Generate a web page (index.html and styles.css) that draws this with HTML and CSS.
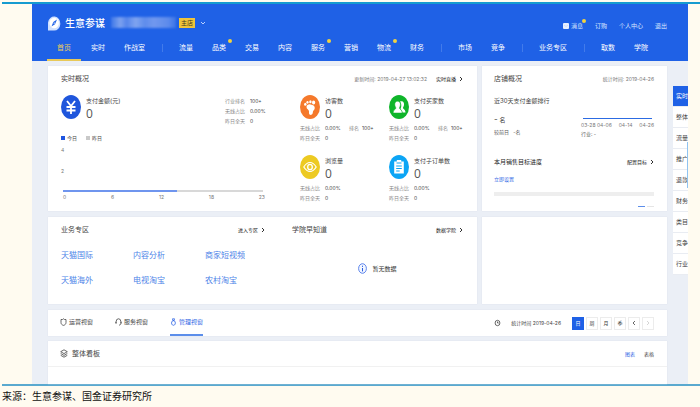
FILE: index.html
```html
<!DOCTYPE html>
<html lang="zh-CN">
<head>
<meta charset="utf-8">
<meta name="viewport" content="width=device-width, initial-scale=1">
<title>生意参谋</title>
<link rel="stylesheet" href="styles.css">
</head>
<body>
<figure class="figure">
<div class="frame">
<div class="app">
  <header class="top">
    <div class="brand-row">
      <svg class="logo" viewBox="0 0 14 16" aria-hidden="true"><path d="M1 15.500V7.500a6.200 7 0 1 1 6 8z" fill="#cfe0ff"/><ellipse cx="7.200" cy="8" rx="4.700" ry="5.300" fill="#fff"/><path d="M10 4.500 8 9.200 4.500 11.500 6.300 7z" fill="#1f61e6"/><circle cx="7.200" cy="8.100" r=".7" fill="#fff"/></svg>
      <h1 class="brand">生意参谋</h1>
      <span class="mask" aria-hidden="true"></span>
      <span class="badge">主店</span>
      <svg class="caret" viewBox="0 0 6 4" aria-hidden="true"><path d="M1 1l2 2 2-2" fill="none" stroke="#b9d0ff"/></svg>
      <nav class="user">
        <a class="dotted" href="#"><svg class="mail" viewBox="0 0 6 6" aria-hidden="true"><rect width="6" height="6" rx="1" fill="#e8f0ff"/><path d="M1 2l2 1.500L5 2" fill="none" stroke="#b5cbf7" stroke-width=".5"/></svg>消息</a>
        <a href="#">订购</a><a href="#">个人中心</a><a href="#">退出</a>
      </nav>
    </div>
    <nav class="nav">
      <a class="on" href="#">首页</a><a href="#">实时</a><a href="#">作战室</a><i></i>
      <a href="#">流量</a><a class="dotted" href="#">品类</a><a href="#">交易</a><a href="#">内容</a><a class="dotted" href="#">服务</a><a href="#">营销</a><a class="dotted" href="#">物流</a><a href="#">财务</a><i></i>
      <a href="#">市场</a><a href="#">竞争</a><i></i><a href="#">业务专区</a><i></i><a href="#">取数</a><a href="#">学院</a>
    </nav>
  </header>

  <main class="content">
    <div class="cards">
      <section class="card live">
        <div class="head">
          <h2>实时概况</h2>
          <span class="time">更新时间: 2019-04-27 13:02:32</span>
          <a class="more" href="#">实时直播<svg viewBox="0 0 4 6" aria-hidden="true"><path d="M1 1l2 2-2 2"/></svg></a>
        </div>
        <div class="live-body">
          <div class="pay">
            <div class="pay-top">
              <svg class="icon" viewBox="0 0 20 24" aria-hidden="true"><ellipse cx="10" cy="12" rx="10" ry="12" fill="#1f56dc"/><path d="M6 6l4 5 4-5M10 11v8M5.500 12h9M5.500 15.500h9" fill="none" stroke="#fff" stroke-width="1.800"/></svg>
              <div class="fig"><h3>支付金额(元)</h3><strong>0</strong></div>
              <dl class="stats"><dt>行业排名</dt><dd>100+</dd><dt>无线占比</dt><dd>0.00%</dd><dt>昨日全天</dt><dd>0</dd></dl>
            </div>
            <div class="legend"><span class="today">今日</span><span class="yesterday">昨日</span></div>
            <div class="chart">
              <div class="ylab"><span>4</span><span>2</span></div>
              <div class="line"></div>
              <div class="xlab"><span>0</span><span>6</span><span>12</span><span>18</span><span>23</span></div>
            </div>
          </div>
          <div class="metrics">
            <article>
              <div class="metric-top"><svg class="icon" viewBox="0 0 20 24" aria-hidden="true"><ellipse cx="10" cy="12" rx="10" ry="12" fill="#f5792b"/><g fill="#fff"><path d="M6.500 12c0-2 2-3 4-2.600 3 .4 4.700 1.600 4.200 4-.3 1.500-1.500 1.800-1.700 3.200-.2 1.800-.6 3.400-2.200 3.400-2 0-1.800-2.200-1.800-3.700 0-1.800-2.500-2-2.500-4.300z"/><ellipse cx="5.300" cy="9.300" rx="1.200" ry="1.500"/><ellipse cx="7.500" cy="7.300" rx="1.100" ry="1.400"/><ellipse cx="10.400" cy="6.700" rx="1.200" ry="1.500"/><ellipse cx="13.600" cy="7.500" rx="1.600" ry="1.900"/></g></svg><div class="fig"><h3>访客数</h3><strong>0</strong></div></div>
              <dl class="stats"><dt>无线占比</dt><dd>0.00%</dd><dt>排名</dt><dd>100+</dd><dt>昨日全天</dt><dd>0</dd></dl>
            </article>
            <article>
              <div class="metric-top"><svg class="icon" viewBox="0 0 20 24" aria-hidden="true"><ellipse cx="10" cy="12" rx="10" ry="12" fill="#0fb52a"/><g fill="#fff"><path d="M11 6.500c3-1.200 4.500 1 4 3.500-.2 1.500-1 2-1 3s2.500 1.500 2.500 4.500h-3c-.2-2-1.500-2.800-2-3.500.8-1.500 1.500-5-.5-7.500z"/><path d="M8.500 6.200c2 0 3 1.500 2.900 3.500-.1 1.700-1 2.600-1 3.400 0 1.300 2.800 1.400 2.800 4.900H4.200c0-3.500 2.700-3.600 2.700-4.900 0-.8-1-1.700-1.100-3.400-.1-2 .9-3.500 2.700-3.500z" stroke="#0fb52a" stroke-width=".5"/></g></svg><div class="fig"><h3>支付买家数</h3><strong>0</strong></div></div>
              <dl class="stats"><dt>无线占比</dt><dd>0.00%</dd><dt>排名</dt><dd>100+</dd><dt>昨日全天</dt><dd>0</dd></dl>
            </article>
            <article>
              <div class="metric-top"><svg class="icon" viewBox="0 0 20 24" aria-hidden="true"><ellipse cx="10" cy="12" rx="10" ry="12" fill="#edca22"/><path d="M3.800 12C7.500 6 12.500 6 16.200 12 12.500 18 7.500 18 3.800 12z" fill="none" stroke="#fff" stroke-width="1.200"/><ellipse cx="10" cy="12" rx="2.300" ry="2.700" fill="none" stroke="#fff" stroke-width="1.300"/></svg><div class="fig"><h3>浏览量</h3><strong>0</strong></div></div>
              <dl class="stats"><dt>无线占比</dt><dd>0.00%</dd><dt></dt><dd></dd><dt>昨日全天</dt><dd>0</dd></dl>
            </article>
            <article>
              <div class="metric-top"><svg class="icon" viewBox="0 0 20 24" aria-hidden="true"><ellipse cx="10" cy="12" rx="10" ry="12" fill="#0ca5f5"/><path d="M5.200 6.500h2.600V5h4.400v1.500h2.600v12H5.200z" fill="#fff"/><path d="M7.500 8h5M7.200 11h5.600M7.200 13.500h5.600M7.200 16h3.500" stroke="#0ca5f5" fill="none"/></svg><div class="fig"><h3>支付子订单数</h3><strong>0</strong></div></div>
              <dl class="stats"><dt>无线占比</dt><dd>0.00%</dd><dt></dt><dd></dd><dt>昨日全天</dt><dd>0</dd></dl>
            </article>
          </div>
        </div>
      </section>

      <section class="card shop">
        <div class="head"><h2>店铺概况</h2><span class="time">统计时间: 2019-04-26</span></div>
        <h3 class="rank-title">近30天支付金额排行</h3>
        <div class="rank">
          <div><p class="place"><b>-</b> 名</p><p class="minor">较前日 &nbsp; -名</p></div>
          <div class="trend"><div class="trend-line"></div><div class="dates"><span>03-28 04-06</span><span>04-14</span><span>04-26</span></div><p class="minor">行业: -</p></div>
        </div>
        <div class="goal"><h3>本月销售目标进度</h3><a class="more" href="#">配置目标<svg viewBox="0 0 4 6" aria-hidden="true"><path d="M1 1l2 2-2 2"/></svg></a></div>
        <a class="set" href="#">立即设置</a>
        <div class="bar"></div>
        <div class="pager"><i class="cur"></i><i></i></div>
      </section>

      <section class="card zone">
        <div>
          <div class="head"><h2>业务专区</h2><a class="more" href="#">进入专区<svg viewBox="0 0 4 6" aria-hidden="true"><path d="M1 1l2 2-2 2"/></svg></a></div>
          <div class="links"><a href="#">天猫国际</a><a href="#">内容分析</a><a href="#">商家短视频</a><a href="#">天猫海外</a><a href="#">电视淘宝</a><a href="#">农村淘宝</a></div>
        </div>
        <div>
          <div class="head"><h2>学院早知道</h2><a class="more" href="#">数据学院<svg viewBox="0 0 4 6" aria-hidden="true"><path d="M1 1l2 2-2 2"/></svg></a></div>
          <p class="empty"><svg viewBox="0 0 9 11" aria-hidden="true"><ellipse cx="4.500" cy="5.500" rx="3.900" ry="4.800" fill="#f2f6ff" stroke="#4f7bea" stroke-width=".9"/><path d="M4.500 2.700v1.200M4.500 5v3.400" stroke="#2a5fe4"/></svg>暂无数据</p>
        </div>
      </section>
      <section class="card"></section>
    </div>

    <section class="card views">
      <a href="#"><svg viewBox="0 0 7 8" aria-hidden="true"><path d="M1 1.500h1.500l1-.7 1 .7H6v3C6 6 5 7 3.500 7.400 2 7 1 6 1 4.500z"/></svg>运营视窗</a>
      <a href="#"><svg viewBox="0 0 7 8" aria-hidden="true"><path d="M1.200 5.500V3.500a2.300 2.700 0 0 1 4.600 0v2c0 1-.8 1.600-1.800 1.600M.8 3.800v1.600M6.200 3.800v1.600"/></svg>服务视窗</a>
      <a class="on" href="#"><svg viewBox="0 0 7 8" aria-hidden="true"><path d="M2.500.8h2L4.200 2.500h-1.400zM3.500 2.700a1.900 2.300 0 1 1-.1 0z"/></svg>管理视窗</a>
      <div class="period">
        <svg viewBox="0 0 7 8" aria-hidden="true"><ellipse cx="3.500" cy="4" rx="2.400" ry="2.700"/><path d="M3.500 2.500V4h1.200"/></svg>
        <span>统计时间 2019-04-26</span>
        <div class="buttons"><button class="sel">日</button><button>周</button><button>月</button><button>季</button><button aria-label="上一个"><svg viewBox="0 0 4 6"><path d="M3 1L1 3l2 2"/></svg></button><button class="off" aria-label="下一个"><svg viewBox="0 0 4 6"><path d="M1 1l2 2-2 2"/></svg></button></div>
      </div>
    </section>

    <section class="card board">
      <div class="board-head">
        <svg viewBox="0 0 8 9" aria-hidden="true"><path d="M4 .8l3.300 1.900L4 4.600.7 2.700zM.7 4.500L4 6.400l3.300-1.900M.7 6.300L4 8.200l3.300-1.900"/></svg>
        <h2>整体看板</h2>
        <a class="chosen" href="#">图表</a><a href="#">表格</a>
      </div>
    </section>
  </main>

  <nav class="rail"><a class="on" href="#">实时</a><a href="#">整体</a><a href="#">流量</a><a href="#">推广</a><a href="#">退款</a><a href="#">财务</a><a href="#">类目</a><a href="#">竞争</a><a href="#">行业</a></nav>
</div>
</div>
<figcaption>来源：生意参谋、国金证券研究所</figcaption>
</figure>
</body>
</html>
```
FILE: styles.css
```css
* { box-sizing: border-box; }
body, h1, h2, h3, p, dl, dd, figure { margin: 0; }
body {
  background: #fffbf0;
  color: #444;
  font: 6px/10px Inter, "Noto Sans CJK SC", sans-serif;
}
a { color: inherit; text-decoration: none; }
h1, h2, h3 { font-weight: 400; }
span, a, h2, h3, dt, dd, button { white-space: nowrap; }
svg { display: block; flex: none; }

.figure { padding: 2px 0 0 2px; }
.frame {
  border-top: 2px solid #169bd0;
  border-bottom: 2px solid #5aa9cf;
  padding: 0 12px 0 30px;
}
.app { position: relative; background: #ebeff6; }
figcaption {
  color: #111;
  font: 10px/20px "KaiTi", "STKaiti", "Noto Sans CJK SC", serif;
}

/* Header */
.top { padding: 0 21px 0 15px; background: #1f61e6; color: #fff; }
.brand-row { display: flex; align-items: center; height: 37px; }
.logo { width: 14px; height: 16px; }
.brand { margin-left: 4px; font-size: 10px; line-height: 16px; font-weight: 500; }
.mask {
  width: 65px;
  height: 11px;
  margin: 0 3px 0 6px;
  background: linear-gradient(90deg, #3d76e8, #7da2ef 14%, #5585eb 24%, #7fa4f0 38%, #5e8cec 52%, #7198ee 66%, #5d8bec 88%, #3b74e8);
  filter: blur(1px);
}
.badge { padding: 0 2px; background: #f0c43a; color: #3d3a25; }
.caret { width: 6px; height: 4px; margin-left: 5px; }
.user { display: flex; gap: 12px; margin-left: auto; padding-top: 6px; color: #dbe6ff; }
.user a { display: flex; align-items: center; gap: 2px; }
.mail { width: 6px; height: 6px; }
.nav { display: flex; gap: 1px; height: 20px; font-size: 7px; line-height: 14px; }
.nav a { padding: 0 9px; }
.nav .on { padding: 0 10px; color: #f0cf58; border-bottom: 2px solid #e8c95a; }
.nav i { width: 1px; height: 8px; margin: 3px 6px 0 7px; background: #427bea; }
.dotted { position: relative; }
.dotted::after {
  content: "";
  position: absolute;
  top: -2px;
  right: 3px;
  width: 4px;
  height: 4px;
  border-radius: 50%;
  background: #f3d33f;
}
.user .dotted::after { right: -3px; }

/* Cards */
.content { padding: 5px 21px 0 16px; }
.cards { display: grid; grid-template-columns: 429fr 185fr; gap: 6px 5px; }
.card { min-width: 0; background: #fff; box-shadow: 0 0 1px #d5dbe6; }
.head { display: flex; align-items: center; height: 10px; }
h2 { font-size: 7px; color: #444; }
h3 { font-size: 6px; }
.time { margin-left: auto; font-size: 5px; color: #777; }
.more { display: flex; align-items: center; gap: 3px; font-size: 5px; color: #222; }
.more svg { width: 4px; height: 6px; fill: none; stroke: #333; }
.time + .more { margin-left: 9px; }
h2 + .more, h3 + .more { margin-left: auto; }

.live { padding: 8px 14px 8px 13px; }
.live-body { display: grid; grid-template-columns: 204fr 163fr; gap: 35px; margin-top: 11px; }
.pay-top, .metric-top { display: flex; gap: 5px; }
.icon { width: 20px; height: 24px; }
.fig h3 { line-height: 12px; }
.fig strong { display: block; font: 12px/14px "Open Sans", sans-serif; color: #555; }
.stats { display: grid; grid-template-columns: 25px 20px; font-size: 5px; line-height: 10px; color: #888; }
.stats dd { color: #444; }
.pay-top .stats { margin-left: auto; padding-top: 1px; grid-template-columns: 25px 15px; }
.metrics { display: grid; grid-template-columns: 89fr 74fr; grid-template-rows: 60px auto; }
.metrics .stats { grid-template-columns: 25px 24px 13px 12px; padding-top: 2px; }
.legend { display: flex; gap: 9px; margin-top: 7px; font-size: 5px; }
.legend span { display: flex; align-items: center; gap: 2px; }
.legend span::before { content: ""; width: 4px; height: 4px; background: #1f55e0; }
.legend .yesterday::before { background: #c9c9c9; }
.chart { margin-top: 2px; font-size: 5px; color: #777; }
.ylab { display: grid; grid-auto-rows: 21px; height: 45px; }
.line { height: 2px; margin: 0 2px; background: linear-gradient(90deg, #6f95ee 57%, #d8d8d8 57%); }
.xlab { display: flex; justify-content: space-between; height: 9px; margin-left: 2px; }

.shop { padding: 8px 13px 3px 12px; }
.rank-title { margin-top: 12px; }
.rank { display: grid; grid-template-columns: 87fr 73fr; margin-top: 7px; }
.place { line-height: 12px; }
.place b { font-size: 8px; font-weight: 400; }
.minor { font-size: 5px; color: #555; }
.rank div:first-child > .minor { margin-top: 1px; }
.trend-line { height: 1px; margin: 5px 2px 1px; background: #2c6be2; }
.dates { display: flex; justify-content: space-between; font-size: 5px; color: #777; }
.trend .minor { margin-top: -1px; }
.goal { display: flex; align-items: center; margin-top: 18px; }
.goal h3 { color: #222; }
.set { display: block; margin-top: 7px; font-size: 5px; color: #2f65e5; }
.bar { height: 4px; margin-top: 8px; background: #eee; }
.pager { display: flex; justify-content: flex-end; gap: 2px; margin-top: 10px; }
.pager i { width: 7px; height: 1px; background: #e5e5e5; }
.pager .cur { background: #5c8eea; }

.zone { display: grid; grid-template-columns: 204fr 171fr; gap: 27px; min-height: 87px; padding: 8px 14px 12px 13px; }
.links { display: grid; grid-template-columns: repeat(3, 1fr); gap: 13px 12px; margin-top: 14px; font-size: 8px; line-height: 12px; color: #4d83e8; }
.empty { display: flex; justify-content: center; align-items: center; gap: 5px; margin-top: 28px; color: #333; }
.empty svg { width: 9px; height: 11px; }

.views { display: flex; gap: 22px; height: 26px; margin-top: 6px; padding: 0 13px 0 12px; }
.views > a { display: flex; align-items: center; gap: 2px; border-bottom: 2px solid transparent; }
.views svg, .board-head svg { fill: none; stroke: #444; stroke-width: .8; }
.views > a svg, .period > svg { width: 7px; height: 8px; }
.views .on { color: #2f65e5; border-color: #5c8eea; }
.views .on svg { stroke: #2f65e5; }
.period { display: flex; align-items: center; margin-left: auto; font-size: 5px; }
.period > span { margin: 0 11px 0 10px; }
.buttons { display: flex; gap: 2px; }
button { display: flex; align-items: center; justify-content: center; width: 12px; height: 13px; padding: 0; border: 1px solid #ececec; background: #fff; color: #333; font: inherit; }
button svg { width: 4px; height: 6px; }
button.sel { background: #1f61e6; border-color: #1f61e6; color: #fff; }
.buttons .off svg { stroke: #ccc; }

.board { min-height: 43px; margin-top: 5px; }
.board-head { display: flex; align-items: center; gap: 4px; height: 26px; padding: 0 13px 0 12px; border-bottom: 1px solid #f1f1f1; }
.board-head svg { width: 8px; height: 9px; }
.board-head a { margin-left: 5px; font-size: 5px; }
.board-head .chosen { margin-left: auto; color: #2f65e5; }

/* Section shortcuts floating over the right edge */
.rail { position: absolute; top: 82px; right: 0; width: 15px; overflow: hidden; background: #fff; font-size: 6px; line-height: 20px; }
.rail a { display: block; padding-left: 3px; border-bottom: 1px solid #e9ecf2; }
.rail .on { background: #1f61e6; color: #fff; }
.rail::after { content: ""; position: absolute; top: 56px; right: 0; width: 1px; height: 46px; background: #8fc3f2; }
```
